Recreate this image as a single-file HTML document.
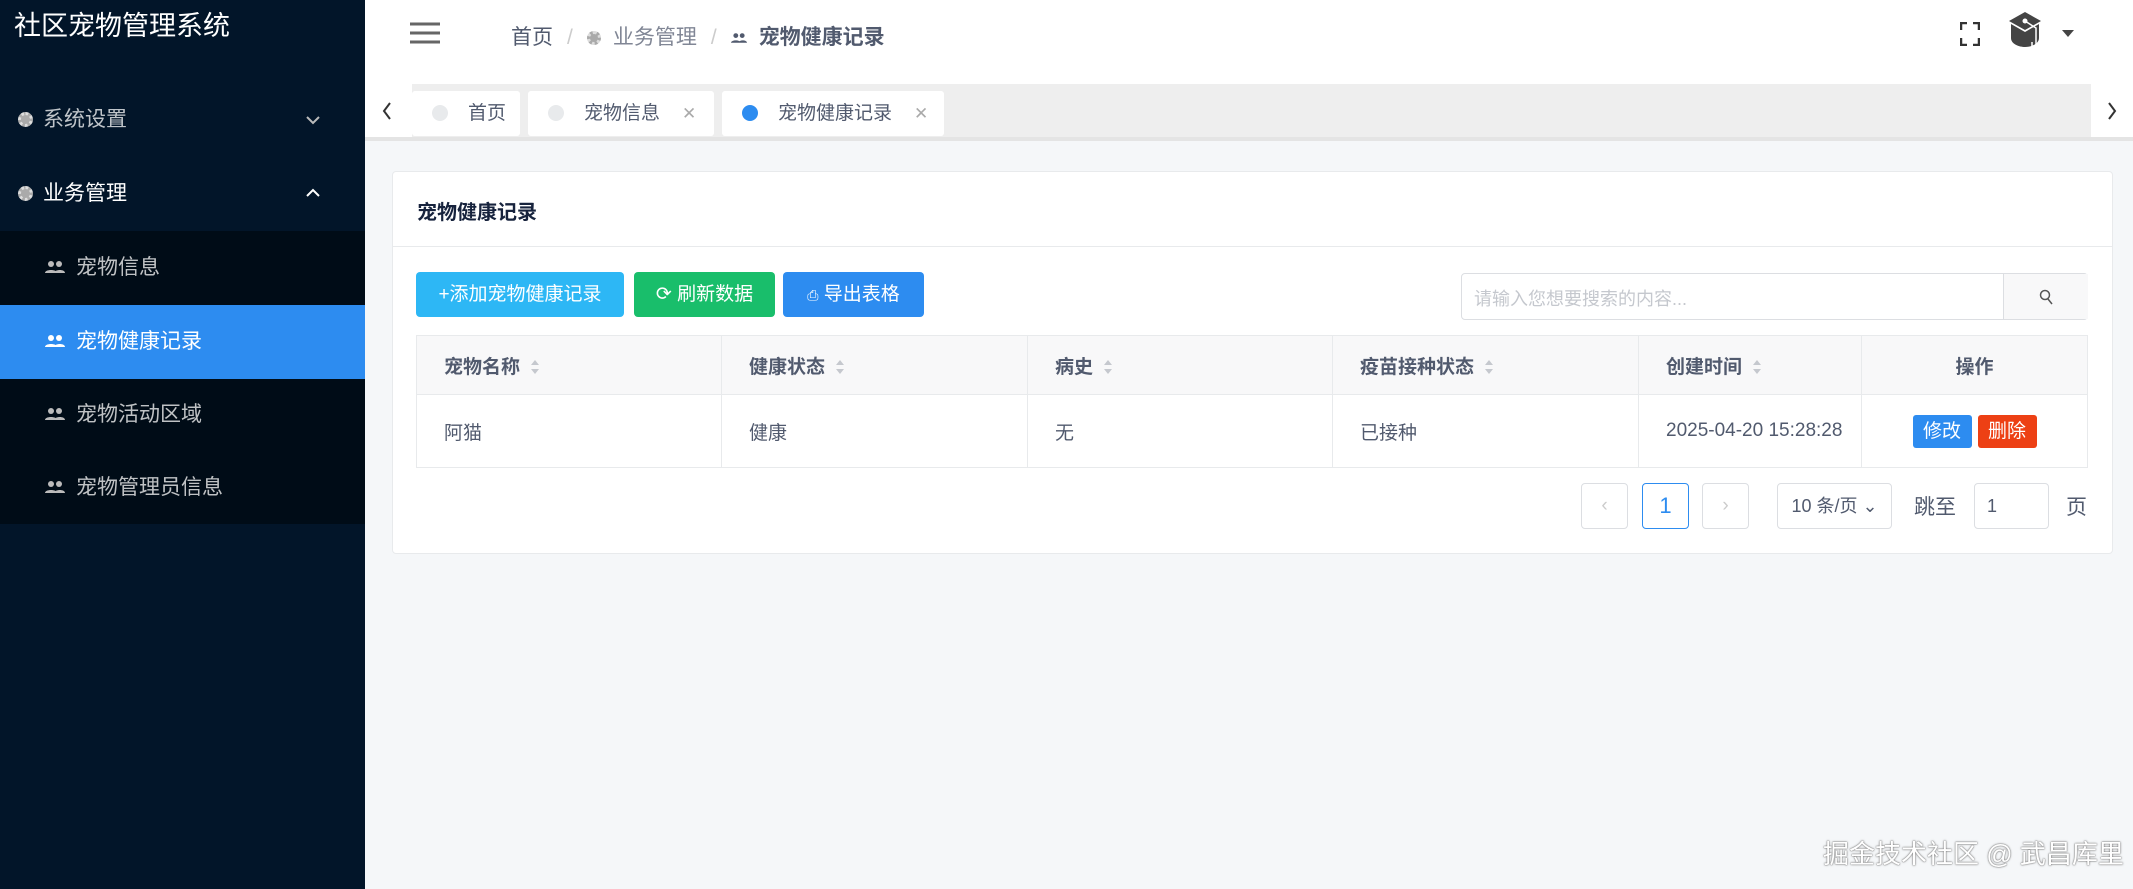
<!DOCTYPE html>
<html><head><meta charset="utf-8"><style>
*{box-sizing:border-box;margin:0;padding:0}
body{width:2133px;height:889px;overflow:hidden;background:#f5f7f9;font-family:"Liberation Sans","Noto Sans CJK SC",sans-serif;position:relative;color:#515a6e}
.abs{position:absolute}
.side{left:0;top:0;width:365px;height:889px;background:#021529}
.side .t{left:14px;top:4px;color:#fff;font-size:27px}
.mi{left:0;width:365px;height:74px;color:rgba(255,255,255,.75);font-size:21px;line-height:74px}
.sub{background:#000c17}
.gear{display:inline-block;width:15px;height:15px;border-radius:50%;background:#aaa;border:3px dotted #ddd;vertical-align:-1px;margin-right:10px}
.ppl{display:inline-block;width:22px;vertical-align:0;margin-right:10px}
.hdr{left:365px;top:0;width:1768px;height:84px;background:#fff}
.tabs{left:365px;top:84px;width:1768px;height:57px;background:#eee;border-bottom:4px solid #e4e4e4}
.tab{top:7px;height:45px;background:#fff;border-radius:3px;font-size:19px;line-height:45px;color:#515a6e}
.dot{display:inline-block;width:16px;height:16px;border-radius:50%;background:#e8eaec;vertical-align:-2px;margin:0 20px 0 20px}
.x{color:#aaa;margin-left:22px;font-size:17px}
.card{left:392px;top:171px;width:1721px;height:383px;background:#fff;border:1px solid #e8eaec;border-radius:4px}
.btn{top:272px;height:45px;color:#fff;font-size:19px;line-height:45px;text-align:center;border-radius:4px}
table{border-collapse:collapse;position:absolute;left:416px;top:335px;width:1672px;font-size:19px}
td,th{border:1px solid #e8eaec;padding-left:27px;text-align:left}
th{background:#f8f8f9;height:59px;color:#515a6e;font-weight:bold}
td{height:73px;color:#515a6e}
.sort{display:inline-block;margin-left:10px;vertical-align:middle;width:10px}
.pg{top:483px;height:46px;border:1px solid #dcdee2;border-radius:4px;background:#fff;text-align:center;line-height:44px;font-size:19px}
.sep{color:#ccc;margin:0 14px}
</style></head><body>
<div class="abs side">
 <div class="abs t">社区宠物管理系统</div>
 <div class="abs mi" style="top:83px;padding-left:18px"><span class="gear"></span>系统设置<svg class="abs" style="right:44px;top:32px" width="16" height="10" viewBox="0 0 16 10"><path d="M2 2L8 8L14 2" stroke="#bbb" stroke-width="2" fill="none"/></svg></div>
 <div class="abs mi" style="top:157px;padding-left:18px;color:#fff"><span class="gear"></span>业务管理<svg class="abs" style="right:44px;top:31px" width="16" height="10" viewBox="0 0 16 10"><path d="M2 8L8 2L14 8" stroke="#fff" stroke-width="2" fill="none"/></svg></div>
 <div class="abs sub" style="left:0;top:231px;width:365px;height:293px"></div>
 <div class="abs mi" style="top:231px;padding-left:44px"><svg class="ppl" width="20" height="14" viewBox="0 0 20 14"><circle cx="6" cy="4" r="3" fill="#bbb"/><circle cx="14" cy="4" r="3" fill="#bbb"/><path d="M0 13c0-4 12-4 12 0zM9 13c1-4 11-4 11 0z" fill="#bbb"/></svg>宠物信息</div>
 <div class="abs mi" style="top:305px;padding-left:44px;background:#2d8cf0;color:#fff"><svg class="ppl" width="20" height="14" viewBox="0 0 20 14"><circle cx="6" cy="4" r="3" fill="#fff"/><circle cx="14" cy="4" r="3" fill="#fff"/><path d="M0 13c0-4 12-4 12 0zM9 13c1-4 11-4 11 0z" fill="#fff"/></svg>宠物健康记录</div>
 <div class="abs mi" style="top:378px;padding-left:44px"><svg class="ppl" width="20" height="14" viewBox="0 0 20 14"><circle cx="6" cy="4" r="3" fill="#bbb"/><circle cx="14" cy="4" r="3" fill="#bbb"/><path d="M0 13c0-4 12-4 12 0zM9 13c1-4 11-4 11 0z" fill="#bbb"/></svg>宠物活动区域</div>
 <div class="abs mi" style="top:451px;padding-left:44px"><svg class="ppl" width="20" height="14" viewBox="0 0 20 14"><circle cx="6" cy="4" r="3" fill="#bbb"/><circle cx="14" cy="4" r="3" fill="#bbb"/><path d="M0 13c0-4 12-4 12 0zM9 13c1-4 11-4 11 0z" fill="#bbb"/></svg>宠物管理员信息</div>
</div>
<div class="abs hdr">
 <svg class="abs" style="left:45px;top:22px" width="30" height="22" viewBox="0 0 30 22"><path d="M0 2h30M0 11h30M0 20h30" stroke="#666" stroke-width="3"/></svg>
 <div class="abs" style="left:146px;top:21px;font-size:21px;color:#515a6e">首页<span class="sep">/</span><span class="gear" style="width:14px;height:14px;margin-right:12px"></span><span style="color:#808695">业务管理</span><span class="sep">/</span><svg width="16" height="12" viewBox="0 0 20 14" style="margin-right:12px"><circle cx="6" cy="4" r="3" fill="#515a6e"/><circle cx="14" cy="4" r="3" fill="#515a6e"/><path d="M0 13c0-4 12-4 12 0zM9 13c1-4 11-4 11 0z" fill="#515a6e"/></svg><b style="color:#515a6e">宠物健康记录</b></div>
 <svg class="abs" style="left:1595px;top:22px" width="20" height="24" viewBox="0 0 20 24"><path d="M1 8V1h6M13 1h6v7M19 16v7h-6M7 23H1v-7" stroke="#333" stroke-width="2.5" fill="none"/></svg>
 <svg class="abs" style="left:1643px;top:12px" width="46" height="44" viewBox="0 0 46 44"><path d="M17 0L33 9L17 18L1 9Z" fill="#444"/><path d="M3 12v14c0 6 8 9 14 9s14-3 14-9V12L17 20Z" fill="#444"/><circle cx="17" cy="9" r="2.5" fill="#fff"/><path d="M17 9L28 16V40M24 30v8M28 30v8M32 30v8" stroke="#fff" stroke-width="1.5" fill="none"/></svg>
 <div class="abs" style="left:1697px;top:30px;width:0;height:0;border-left:6px solid transparent;border-right:6px solid transparent;border-top:7px solid #444"></div>
</div>
<div class="abs tabs">
 <div class="abs" style="left:0;top:0;width:47px;height:53px;background:#fff"><svg class="abs" style="left:17px;top:18px" width="10" height="18" viewBox="0 0 10 18"><path d="M8 1L2 9L8 17" stroke="#333" stroke-width="2" fill="none"/></svg></div>
 <div class="abs tab" style="left:47px;width:108px"><span class="dot"></span>首页</div>
 <div class="abs tab" style="left:163px;width:186px"><span class="dot"></span>宠物信息<span class="x">✕</span></div>
 <div class="abs tab" style="left:357px;width:222px"><span class="dot" style="background:#2d8cf0"></span>宠物健康记录<span class="x">✕</span></div>
 <div class="abs" style="left:1726px;top:0;width:42px;height:53px;background:#fff"><svg class="abs" style="left:16px;top:18px" width="10" height="18" viewBox="0 0 10 18"><path d="M2 1L8 9L2 17" stroke="#333" stroke-width="2" fill="none"/></svg></div>
</div>
<div class="abs card"><div class="abs" style="left:0;top:74px;width:100%;border-top:1px solid #e8eaec"></div><div class="abs" style="left:24px;top:24px;font-size:20px;font-weight:bold;color:#17233d">宠物健康记录</div></div>
<div class="abs btn" style="left:416px;width:208px;background:#2db7f5">+添加宠物健康记录</div>
<div class="abs btn" style="left:634px;width:141px;background:#19be6b">&#10227; 刷新数据</div>
<div class="abs btn" style="left:783px;width:141px;background:#2d8cf0"><span style="font-size:14px">⎙</span> 导出表格</div>
<div class="abs" style="left:1461px;top:273px;width:627px;height:47px;border:1px solid #dcdee2;border-radius:4px;background:#fff">
 <div class="abs" style="left:12px;top:11px;font-size:18px;color:#c5c8ce">请输入您想要搜索的内容...</div>
 <div class="abs" style="left:541px;top:0;width:85px;height:45px;background:#f8f8f9;border-left:1px solid #dcdee2"><svg class="abs" style="left:35px;top:15px" width="14" height="16" viewBox="0 0 14 16"><circle cx="6" cy="6" r="4.5" stroke="#555" stroke-width="1.5" fill="none"/><path d="M9 10l4 5" stroke="#555" stroke-width="1.5"/></svg></div>
</div>
<table>
<tr><th style="width:305px">宠物名称<svg class="sort" width="10" height="16" viewBox="0 0 10 16"><path d="M5 1L9 6H1ZM5 15L9 10H1Z" fill="#c5c8ce"/></svg></th><th style="width:306px">健康状态<svg class="sort" width="10" height="16" viewBox="0 0 10 16"><path d="M5 1L9 6H1ZM5 15L9 10H1Z" fill="#c5c8ce"/></svg></th><th style="width:305px">病史<svg class="sort" width="10" height="16" viewBox="0 0 10 16"><path d="M5 1L9 6H1ZM5 15L9 10H1Z" fill="#c5c8ce"/></svg></th><th style="width:306px">疫苗接种状态<svg class="sort" width="10" height="16" viewBox="0 0 10 16"><path d="M5 1L9 6H1ZM5 15L9 10H1Z" fill="#c5c8ce"/></svg></th><th style="width:223px">创建时间<svg class="sort" width="10" height="16" viewBox="0 0 10 16"><path d="M5 1L9 6H1ZM5 15L9 10H1Z" fill="#c5c8ce"/></svg></th><th style="text-align:center;padding:0">操作</th></tr>
<tr><td>阿猫</td><td>健康</td><td>无</td><td>已接种</td><td>2025-04-20 15:28:28</td><td style="text-align:center;padding:0"><span style="display:inline-block;background:#2d8cf0;color:#fff;width:59px;height:33px;line-height:33px;border-radius:3px;margin-right:6px">修改</span><span style="display:inline-block;background:#ed4014;color:#fff;width:59px;height:33px;line-height:33px;border-radius:3px">删除</span></td></tr>
</table>
<div class="abs pg" style="left:1581px;width:47px;color:#ccc">&#8249;</div>
<div class="abs pg" style="left:1642px;width:47px;border-color:#2d8cf0;color:#2d8cf0;font-size:22px">1</div>
<div class="abs pg" style="left:1702px;width:47px;color:#ccc">&#8250;</div>
<div class="abs pg" style="left:1777px;width:115px;font-size:18px;color:#515a6e">10 条/页 ⌄</div>
<div class="abs" style="left:1914px;top:491px;font-size:21px;color:#515a6e">跳至</div>
<div class="abs pg" style="left:1974px;width:75px;text-align:left;padding-left:12px;font-size:18px;color:#515a6e">1</div>
<div class="abs" style="left:2066px;top:491px;font-size:21px;color:#515a6e">页</div>
<div class="abs" style="left:1823px;top:834px;font-size:26px;color:#fff;text-shadow:0 0 2px #777,0 0 1px #555">掘金技术社区 @ 武昌库里</div>
</body></html>
